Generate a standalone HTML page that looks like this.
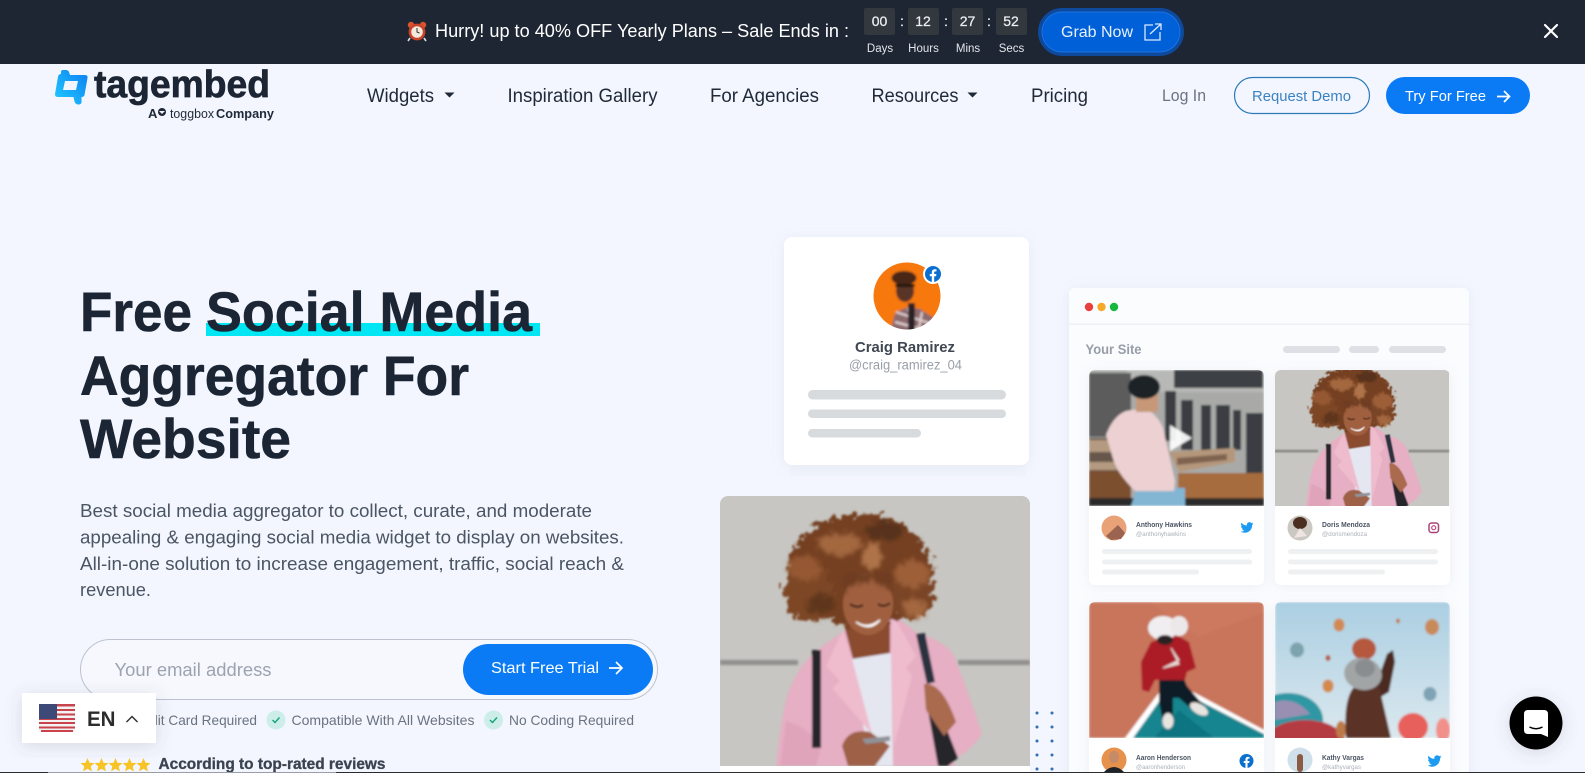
<!DOCTYPE html>
<html lang="en"><head><meta charset="utf-8"><title>Tagembed</title>
<style>
html,body{margin:0;padding:0;width:1585px;height:773px;overflow:hidden;background:#f3f6fe}
svg{display:block}
text{font-family:"Liberation Sans",sans-serif;white-space:pre}
.b{font-weight:700}
</style></head><body>
<svg width="1585" height="773" viewBox="0 0 1585 773" xmlns="http://www.w3.org/2000/svg">
<defs>
<filter id="soft" x="-5%" y="-5%" width="110%" height="110%"><feGaussianBlur stdDeviation="1"/></filter>
<filter id="soft2" x="-5%" y="-50%" width="110%" height="200%"><feGaussianBlur stdDeviation="1.4"/></filter>
<filter id="curl" x="-20%" y="-20%" width="140%" height="140%"><feTurbulence type="fractalNoise" baseFrequency=".16" numOctaves="3" seed="4" result="n"/><feDisplacementMap in="SourceGraphic" in2="n" scale="20" xChannelSelector="R" yChannelSelector="G"/></filter>
<filter id="curl2" x="-30%" y="-30%" width="160%" height="160%"><feTurbulence type="fractalNoise" baseFrequency=".22" numOctaves="2" seed="9" result="n"/><feDisplacementMap in="SourceGraphic" in2="n" scale="16" xChannelSelector="G" yChannelSelector="R"/><feGaussianBlur stdDeviation="1.5"/></filter>
<filter id="sh" x="-10%" y="-10%" width="120%" height="120%"><feDropShadow dx="0" dy="2" stdDeviation="6" flood-color="#8a97b5" flood-opacity=".13"/></filter>
<filter id="sh2" x="-30%" y="-30%" width="160%" height="160%"><feDropShadow dx="0" dy="3" stdDeviation="8" flood-color="#556" flood-opacity=".18"/></filter>
<clipPath id="pc"><rect width="175" height="160" rx="6"/></clipPath>
<clipPath id="wc"><rect width="310" height="290" rx="8"/></clipPath>
<clipPath id="ac"><circle cx="907" cy="296" r="33.500"/></clipPath>
<linearGradient id="lg" x1="1" y1="0" x2="0" y2="1"><stop offset="0" stop-color="#0c7ef2"/><stop offset="1" stop-color="#23cdff"/></linearGradient>
<linearGradient id="sky" x1="0" y1="0" x2="0" y2="1"><stop offset="0" stop-color="#abcfe2"/><stop offset="1" stop-color="#dbe8ee"/></linearGradient>
<symbol id="tw" viewBox="0 0 24 24"><path fill="#1d9bf0" d="M23.95 4.57a10 10 0 0 1-2.82.78 4.96 4.96 0 0 0 2.16-2.72c-.95.55-2 .96-3.12 1.19a4.92 4.92 0 0 0-8.38 4.48C7.69 8.1 4.07 6.13 1.64 3.16a4.82 4.82 0 0 0-.66 2.47c0 1.71.87 3.21 2.19 4.1a4.9 4.9 0 0 1-2.23-.61v.06a4.92 4.92 0 0 0 3.95 4.83 5 5 0 0 1-2.21.08 4.94 4.94 0 0 0 4.6 3.42A9.87 9.87 0 0 1 0 19.54a13.94 13.94 0 0 0 7.55 2.21c9.05 0 14-7.5 14-13.99 0-.21 0-.42-.02-.63A9.94 9.94 0 0 0 24 4.59z"/></symbol>
<symbol id="fb" viewBox="0 0 24 24"><circle cx="12" cy="12" r="12" fill="#0b6fd0"/><path fill="#fff" d="M16.6 15.4l.5-3.4h-3.3V9.8c0-.9.5-1.8 1.900-1.800h1.500V5.100s-1.300-.2-2.600-.2c-2.700 0-4.400 1.600-4.400 4.600V12h-3v3.400h3V24h3.600v-8.600z"/></symbol>
<g id="woman">
  <rect width="310" height="270" fill="#c7c6c2"/>
  <rect x="0" y="164" width="78" height="5" fill="#8f8e8a" filter="url(#soft2)"/>
  <rect x="238" y="164" width="72" height="5" fill="#8f8e8a" filter="url(#soft2)"/>
  <g filter="url(#soft)">
    <path d="M56 270Q60 230 66 205Q74 172 100 152L125 134 172 117 197 137Q225 145 234 160Q250 200 262 238Q250 256 232 264L236 270Z" fill="#e6afc3"/>
    <path d="M66 225q28 8 34 30l-4 15H60z" fill="#dfa4ba"/>
    <path d="M123 125L170 125 170 157 133 163Z" fill="#8a4c2e"/>
    <path d="M132 163L171 157 173 270 150 270Z" fill="#e4e7f0"/>
    <path d="M123 134L106 170 120 185 112 192 152 238 132 163ZM172 117L196 160 186 172 192 180 174 250 171 157Z" fill="#eebccd"/>
    <rect x="92" y="154" width="9" height="98" fill="#25262c"/>
    <path d="M196 138L205 137 215 186 207 188Z" fill="#2a3140"/>
    <path d="M205 198L213 198 238 262 228 270 218 270Z" fill="#25262c"/>
    <g filter="url(#curl)">
      <ellipse cx="140" cy="74" rx="72" ry="56" fill="#744024"/>
      <ellipse cx="88" cy="96" rx="24" ry="30" fill="#7d4727"/>
      <ellipse cx="190" cy="96" rx="24" ry="26" fill="#7a4526"/>
    </g>
    <g filter="url(#curl2)" opacity=".9">
      <ellipse cx="120" cy="48" rx="22" ry="11" fill="#a86c42"/>
      <ellipse cx="152" cy="60" rx="10" ry="14" fill="#b5794e"/>
      <ellipse cx="85" cy="72" rx="16" ry="12" fill="#995c36"/>
      <ellipse cx="192" cy="78" rx="18" ry="14" fill="#a0623a"/>
      <ellipse cx="165" cy="35" rx="20" ry="9" fill="#55301b"/>
      <ellipse cx="100" cy="108" rx="14" ry="10" fill="#5c351f"/>
      <ellipse cx="195" cy="112" rx="12" ry="10" fill="#a86c42"/>
    </g>
    <ellipse cx="148" cy="108" rx="25" ry="31" fill="#a0603f"/>
    <path d="M123 98Q148 72 173 98L172 76 124 76Z" fill="#6f3c20" filter="url(#curl2)"/>
    <path d="M130 108q7 5 13 1M158 108q6 4 12-1" stroke="#3a1e12" stroke-width="2" fill="none"/>
    <path d="M136 126q12 8 24-2q-10 12-24 2z" fill="#fff" stroke="#fff" stroke-width="1.500"/>
    <path d="M204 188Q222 186 236 226L224 240 206 214Z" fill="#a96a4d"/>
    <path d="M122 250Q128 232 150 236L170 250 155 270 128 270Z" fill="#9e6046"/>
    <path d="M142 243L170 240 170 245 146 248Z" fill="#8f9399"/>
  </g>
</g>
</defs>

<rect width="1585" height="773" fill="#f3f6fe"/>

<!-- top banner -->
<rect width="1585" height="64" fill="#1e2633"/>
<g>
  <circle cx="411" cy="25" r="3.200" fill="#d9532f"/><circle cx="423" cy="25" r="3.200" fill="#d9532f"/>
  <path d="M410 38l-2 3M424 38l2 3" stroke="#ddd" stroke-width="1.600"/>
  <circle cx="417" cy="32" r="8.400" fill="#c9432a"/><circle cx="417" cy="32" r="5.800" fill="#f4e9dc"/>
  <path d="M417 28v4l2.500 1" stroke="#333" stroke-width="1" fill="none"/>
</g>
<text x="435" y="37" font-size="18.500" fill="#fff" textLength="414" lengthAdjust="spacingAndGlyphs">Hurry! up to 40% OFF Yearly Plans – Sale Ends in :</text>
<g fill="#33383f">
<rect x="864" y="8" width="31" height="27" rx="2"/><rect x="908" y="8" width="31" height="27" rx="2"/><rect x="952" y="8" width="31" height="27" rx="2"/><rect x="996" y="8" width="31" height="27" rx="2"/>
</g>
<g font-size="14" fill="#eceff3" text-anchor="middle" stroke="#eceff3" stroke-width=".25">
<text x="879.500" y="26">00</text><text x="923" y="26">12</text><text x="967.500" y="26">27</text><text x="1011" y="26">52</text>
<text x="902" y="26">:</text><text x="946" y="26">:</text><text x="989" y="26">:</text>
</g>
<g font-size="11.500" fill="#e2e5ea" text-anchor="middle">
<text x="880" y="52">Days</text><text x="923.500" y="52">Hours</text><text x="968" y="52">Mins</text><text x="1011.500" y="52">Secs</text>
</g>
<rect x="1038" y="8" width="146" height="48" rx="24" fill="#0d4a9e"/>
<rect x="1042" y="12" width="138" height="40" rx="20" fill="#0060d8" stroke="#1b72e2"/>
<text x="1061" y="37" font-size="16" fill="#e8f1ff" textLength="72" lengthAdjust="spacingAndGlyphs">Grab Now</text>
<path d="M1153 25h-8v15h15v-8M1150 34l11-10M1155 24h6v6" fill="none" stroke="#dbe8ff" stroke-width="1.300"/>
<path d="M1545 25l12 12M1557 25l-12 12" stroke="#fff" stroke-width="2.200" stroke-linecap="round"/>

<!-- logo -->
<path d="M61 75V72q0-2 2-2h3q2 0 3 2l1 3h15q3 0 2.500 3l-3 17q-.5 2-3 2v5q0 2.500-3 2.500t-4-3l-1-4.500H58q-3 0-3-3l3-17q.3-3 3-3zM65 81l-2 9h13l2-9z" fill="url(#lg)" fill-rule="evenodd"/>
<text x="94" y="97" font-size="38" class="b" fill="#1c2534" textLength="176" lengthAdjust="spacingAndGlyphs" stroke="#1c2534" stroke-width=".7">tagembed</text>
<text x="148" y="118" font-size="13" class="b" fill="#1f2937">A</text>
<circle cx="162" cy="112" r="4" fill="#1f2937"/><path d="M159 111h6l-3 3z" fill="#f3f6fe"/>
<text x="170" y="118" font-size="12.500" fill="#1f2937" textLength="44" lengthAdjust="spacingAndGlyphs">toggbox</text>
<text x="216" y="118" font-size="12.500" class="b" fill="#1f2937" textLength="58" lengthAdjust="spacingAndGlyphs">Company</text>

<!-- nav -->
<g font-size="19" fill="#1f2937">
<text x="367" y="102" textLength="67" lengthAdjust="spacingAndGlyphs">Widgets</text>
<text x="507.500" y="102" textLength="150" lengthAdjust="spacingAndGlyphs">Inspiration Gallery</text>
<text x="710" y="102" textLength="109" lengthAdjust="spacingAndGlyphs">For Agencies</text>
<text x="871.500" y="102" textLength="87" lengthAdjust="spacingAndGlyphs">Resources</text>
<text x="1031" y="102" textLength="57" lengthAdjust="spacingAndGlyphs">Pricing</text>
</g>
<path d="M444.500 92.500h10l-5 5zM967.500 92.500h10l-5 5z" fill="#1f2937"/>
<text x="1162" y="101" font-size="16.500" fill="#6b7280" textLength="44" lengthAdjust="spacingAndGlyphs">Log In</text>
<rect x="1234.500" y="77.500" width="135" height="36" rx="18" fill="none" stroke="#2b7bb8" stroke-width="1.200"/>
<text x="1252" y="101" font-size="15" fill="#3a82c2" textLength="99" lengthAdjust="spacingAndGlyphs">Request Demo</text>
<rect x="1386" y="77" width="144" height="37" rx="18.500" fill="#0b7bf5"/>
<text x="1405" y="101" font-size="15" fill="#fff" textLength="81" lengthAdjust="spacingAndGlyphs">Try For Free</text>
<path d="M1497 96.500h12M1504 91l5.500 5.500-5.500 5.500" fill="none" stroke="#fff" stroke-width="1.700"/>

<!-- hero -->
<rect x="206" y="323" width="334" height="13" fill="#00e6f3"/>
<g font-size="56" class="b" fill="#1b2534" stroke="#1b2534" stroke-width=".6">
<text x="80" y="331" textLength="112" lengthAdjust="spacingAndGlyphs">Free</text>
<text x="206" y="331" textLength="326" lengthAdjust="spacingAndGlyphs">Social Media</text>
<text x="80" y="395" textLength="389" lengthAdjust="spacingAndGlyphs">Aggregator For</text>
<text x="80" y="458" textLength="211" lengthAdjust="spacingAndGlyphs">Website</text>
</g>
<g font-size="18.500" fill="#4b5563">
<text x="80" y="517" textLength="512" lengthAdjust="spacingAndGlyphs">Best social media aggregator to collect, curate, and moderate</text>
<text x="80" y="543.500" textLength="544" lengthAdjust="spacingAndGlyphs">appealing &amp; engaging social media widget to display on websites.</text>
<text x="80" y="570" textLength="544" lengthAdjust="spacingAndGlyphs">All-in-one solution to increase engagement, traffic, social reach &amp;</text>
<text x="80" y="596" textLength="71" lengthAdjust="spacingAndGlyphs">revenue.</text>
</g>

<!-- form -->
<rect x="80.500" y="639.500" width="577" height="60" rx="30" fill="#f6f8fe" stroke="#bcc2cf"/>
<text x="114.500" y="676" font-size="18.500" fill="#9ca3af" textLength="157" lengthAdjust="spacingAndGlyphs">Your email address</text>
<rect x="463" y="644" width="190" height="51" rx="25.500" fill="#0b7bf5"/>
<text x="491" y="673" font-size="16" fill="#fff" textLength="108" lengthAdjust="spacingAndGlyphs">Start Free Trial</text>
<path d="M609 668h13M616 662l6 6-6 6" fill="none" stroke="#fff" stroke-width="1.700"/>

<!-- checks -->
<text x="107" y="725" font-size="14" fill="#6b7280" textLength="150" lengthAdjust="spacingAndGlyphs">No Credit Card Required</text>
<circle cx="276" cy="720" r="9.500" fill="#cdeee8"/><path d="M272.500 720l2.500 2.500 4.500-5" fill="none" stroke="#14a37f" stroke-width="1.400"/>
<text x="291.500" y="725" font-size="14" fill="#6b7280" textLength="183" lengthAdjust="spacingAndGlyphs">Compatible With All Websites</text>
<circle cx="493.500" cy="720" r="9.500" fill="#cdeee8"/><path d="M490 720l2.500 2.500 4.500-5" fill="none" stroke="#14a37f" stroke-width="1.400"/>
<text x="509" y="725" font-size="14" fill="#6b7280" textLength="125" lengthAdjust="spacingAndGlyphs">No Coding Required</text>

<!-- stars -->
<g fill="#f7c325">
<path id="st" d="M87.500 758l2 4.700 5 .4-3.800 3.300 1.200 5-4.400-2.700-4.400 2.700 1.200-5-3.800-3.300 5-.4z"/>
<use href="#st" x="14"/><use href="#st" x="28"/><use href="#st" x="42"/><use href="#st" x="56"/>
</g>
<text x="158.500" y="769" font-size="15.500" class="b" fill="#3b4350" stroke="#3b4350" stroke-width=".3" textLength="227" lengthAdjust="spacingAndGlyphs">According to top-rated reviews</text>

<!-- language widget -->
<rect x="22" y="693" width="134" height="50" fill="#fff" filter="url(#sh2)"/>
<g>
  <rect x="39" y="704" width="36" height="28" rx="3" fill="#f3f3f3"/>
  <g fill="#c9434c"><rect x="39" y="704" width="36" height="2.500"/><rect x="39" y="709" width="36" height="2"/><rect x="39" y="713.500" width="36" height="2"/><rect x="39" y="718" width="36" height="2"/><rect x="39" y="722" width="36" height="2"/><rect x="39" y="726.500" width="36" height="2"/><rect x="41" y="730" width="32" height="2"/></g>
  <rect x="39" y="704" width="18" height="15" fill="#3d4a78"/>
</g>
<text x="87" y="726" font-size="21" class="b" fill="#2c2c2c" textLength="28.500" lengthAdjust="spacingAndGlyphs">EN</text>
<path d="M126.500 722l5.500-5.500 5.500 5.500" fill="none" stroke="#333" stroke-width="1.500"/>

<!-- profile card -->
<rect x="784" y="237" width="245" height="228" rx="8" fill="#fff" filter="url(#sh)"/>
<rect x="790" y="466" width="236" height="10" fill="#e6ebf5" opacity=".25"/>
<g clip-path="url(#ac)"><g filter="url(#soft)">
  <rect x="870" y="260" width="75" height="75" fill="#f7780f"/>
  <path d="M892 330q0-10 4-18l12-5 12 2 14 9q4 5 2 10l-10 12h-30z" fill="#8c6a6e"/>
  <path d="M896 312l36 12M895 322l30 8M908 308l6 26M922 312l-4 22" stroke="#e0cfcf" stroke-width="2.200" fill="none"/>
  <rect x="908" y="303" width="7" height="30" fill="#2c2226"/>
  <ellipse cx="905" cy="291" rx="9" ry="11" fill="#5a3526"/>
  <ellipse cx="904" cy="278" rx="12.500" ry="7" fill="#4a2618"/>
  <rect x="895" y="284" width="20" height="3" rx="1.500" fill="#1d1210"/>
</g></g>
<circle cx="933" cy="274" r="10" fill="#fff"/>
<use href="#fb" x="925" y="266" width="16" height="16"/>
<text x="855" y="352" font-size="15" class="b" fill="#3f4752" textLength="100" lengthAdjust="spacingAndGlyphs">Craig Ramirez</text>
<text x="849" y="369.500" font-size="13.500" fill="#9aa0aa" textLength="113" lengthAdjust="spacingAndGlyphs">@craig_ramirez_04</text>
<g fill="#d8dbde">
<rect x="808" y="390" width="198" height="9.500" rx="4.700"/><rect x="808" y="409.500" width="198" height="8.500" rx="4.200"/><rect x="808" y="429" width="113" height="8.500" rx="4.200"/>
</g>

<!-- large woman photo -->
<g transform="translate(720 496)" clip-path="url(#wc)">
  <rect width="310" height="280" fill="#fff"/>
  <svg width="310" height="270" viewBox="0 0 310 270"><use href="#woman"/></svg>
</g>
<g fill="#2f6fb3">
<circle cx="1037" cy="713" r="1.500"/><circle cx="1037" cy="727" r="1.500"/><circle cx="1037" cy="741" r="1.500"/><circle cx="1037" cy="755" r="1.500"/><circle cx="1037" cy="769" r="1.500"/>
<circle cx="1052" cy="713" r="1.500"/><circle cx="1052" cy="727" r="1.500"/><circle cx="1052" cy="741" r="1.500"/><circle cx="1052" cy="755" r="1.500"/><circle cx="1052" cy="769" r="1.500"/>
</g>

<!-- site card -->
<rect x="1069" y="288" width="400" height="500" rx="6" fill="#fbfcfe" filter="url(#sh)"/>
<rect x="1069" y="323.500" width="400" height="1.500" fill="#eef0f4"/>
<circle cx="1089" cy="307" r="4.200" fill="#e8403f"/><circle cx="1101.500" cy="307" r="4.200" fill="#f4a928"/><circle cx="1114" cy="307" r="4.200" fill="#16b83f"/>
<text x="1085.500" y="354" font-size="13.500" class="b" fill="#979da8" textLength="56" lengthAdjust="spacingAndGlyphs">Your Site</text>
<g fill="#dde0e4"><rect x="1283" y="346" width="57" height="7" rx="3.500"/><rect x="1349" y="346" width="30" height="7" rx="3.500"/><rect x="1389" y="346" width="57" height="7" rx="3.500"/></g>

<!-- inner cards -->
<g fill="#fff" filter="url(#sh)">
<rect x="1089" y="370" width="175" height="215" rx="6"/><rect x="1275" y="370" width="175" height="215" rx="6"/>
<rect x="1089" y="602" width="175" height="190" rx="6"/><rect x="1275" y="602" width="175" height="190" rx="6"/>
</g>

<!-- photo 1 -->
<g transform="translate(1089 370)" clip-path="url(#pc)"><svg width="175" height="136" viewBox="0 0 175 136"><g filter="url(#soft)">
  <rect width="175" height="136" fill="#a9aaa8"/>
  <rect x="38" y="0" width="137" height="22" fill="#b8b9b7"/>
  <rect x="0" y="3" width="42" height="64" fill="#5b5c5c"/>
  <rect x="85" y="0" width="89" height="18" fill="#3d4044"/>
  <g fill="#3a3e42"><rect x="76" y="21" width="11" height="50"/><rect x="92" y="30" width="12" height="50"/><rect x="112" y="35" width="10" height="45"/><rect x="127" y="35" width="14" height="45"/><rect x="144" y="40" width="8" height="40"/><rect x="157" y="43" width="17" height="62"/></g>
  <path d="M0 68L45 68 45 102 0 102Z" fill="#66564b"/>
  <path d="M80 82L146 78 146 92 90 102Z" fill="#b5977c"/><path d="M88 88l50-4v6l-50 5z" fill="#7f6450"/>
  <path d="M0 70h30v12H0zM0 92h35v8H0z" fill="#b49a80"/>
  <rect x="89" y="103" width="86" height="26" fill="#a66c3e"/>
  <rect x="0" y="101" width="42" height="30" fill="#7c4f2f"/>
  <rect x="0" y="128" width="175" height="8" fill="#2c2a2a"/>
  <path d="M42 136L48 118 96 118 96 136Z" fill="#83b6d3"/>
  <path d="M17 65Q24 46 37 41Q50 38 61 41Q70 48 74 58L86 111 85 121 46 121Q30 105 25 92Z" fill="#ecd0d2"/>
  <rect x="47" y="24" width="22" height="18" fill="#c69878"/>
  <ellipse cx="55" cy="17" rx="16" ry="12" fill="#1d2228"/>
  <path d="M81 55L103 68 81 81Z" fill="#fff" opacity=".92"/>
</g></svg></g>

<!-- photo 2 -->
<g transform="translate(1275 370)" clip-path="url(#pc)"><svg width="175" height="136" viewBox="0 0 175 136"><g transform="translate(-1 -13) scale(.565)"><use href="#woman"/></g></svg></g>

<!-- photo 3 -->
<g transform="translate(1089 602)" clip-path="url(#pc)"><svg width="175" height="136" viewBox="0 0 175 136"><g filter="url(#soft)">
  <rect width="175" height="136" fill="#c8745b"/>
  <path d="M60 0L110 35 175 10 175 0Z" fill="#d07d63" opacity=".5"/>
  <path d="M36 136L72 88 104 90 175 128 175 136Z" fill="#fff"/>
  <path d="M44 136L74 94 103 95 175 132 175 136Z" fill="#15858f"/>
  <path d="M65 136L90 108 125 136Z" fill="#0f6d7a" opacity=".7"/>
  <path d="M70 74L92 70 98 84 115 104 106 110 90 96 84 96 84 118 74 120 70 100Z" fill="#0f1c26"/>
  <ellipse cx="79" cy="119" rx="5.500" ry="8" fill="#e8e4e0"/><ellipse cx="110" cy="107" rx="10" ry="5" fill="#e8e4e0" transform="rotate(30 110 107)"/>
  <path d="M62 40L86 32 100 40 107 66 98 70 96 78 66 78 60 90 53 88 52 60Z" fill="#ab1b28"/>
  <path d="M82 46L90 62 74 66 90 58Z" fill="#ead9d7" stroke="#ead9d7"/>
  <ellipse cx="74" cy="26" rx="15" ry="12" fill="#f0eef0"/><ellipse cx="90" cy="24" rx="9" ry="10" fill="#ece8ea"/><ellipse cx="76" cy="38" rx="8" ry="5" fill="#2a2023"/>
</g></svg></g>

<!-- photo 4 -->
<g transform="translate(1275 602)" clip-path="url(#pc)"><svg width="175" height="136" viewBox="0 0 175 136"><g filter="url(#soft)">
  <rect width="175" height="136" fill="url(#sky)"/>
  <ellipse cx="64" cy="23" rx="5.500" ry="6.500" fill="#d18a56"/><ellipse cx="157" cy="25" rx="7" ry="8" fill="#c98a5a"/><ellipse cx="22" cy="48" rx="7" ry="7.500" fill="#7da3ad"/>
  <ellipse cx="89" cy="47" rx="12" ry="11" fill="#b5583c"/><ellipse cx="53" cy="56" rx="2.500" ry="3" fill="#b5583c"/>
  <ellipse cx="53" cy="84" rx="5.500" ry="6.500" fill="#d28a4e"/><ellipse cx="155" cy="92" rx="6.500" ry="7" fill="#7fa3b4"/><ellipse cx="123" cy="19" rx="2" ry="2.500" fill="#c07c4c"/>
  <ellipse cx="13" cy="118" rx="35" ry="27" fill="#2e97a3"/><path d="M0 100q20-6 35 12l-35 6z" fill="#c78bb8" opacity=".7"/>
  <ellipse cx="30" cy="140" rx="40" ry="22" fill="#b53a42"/>
  <ellipse cx="138" cy="125" rx="15" ry="14" fill="#e7605c"/><ellipse cx="168" cy="128" rx="7" ry="12" fill="#f1908a"/><ellipse cx="66" cy="128" rx="5" ry="9" fill="#bd7a4a"/>
  <path d="M112 52L118 48 120 60 114 90 104 96 100 86Z" fill="#4c2b22"/>
  <path d="M71 136Q68 100 78 86L104 84 116 136Z" fill="#5a3328"/>
  <ellipse cx="88" cy="72" rx="19" ry="16" fill="#a2a5a6" transform="rotate(12 88 72)"/><ellipse cx="90" cy="66" rx="10" ry="9" fill="#8a8d8f"/>
</g></svg></g>

<!-- card meta row 1 -->
<g>
<circle cx="1114" cy="528" r="12.500" fill="#e9a278"/><path d="M1106 536l12-11 7 8-4 6-10 1z" fill="#9a6450"/>
<text x="1136" y="527" font-size="7" class="b" fill="#4b5563" textLength="56" lengthAdjust="spacingAndGlyphs">Anthony Hawkins</text>
<text x="1136" y="536" font-size="6" fill="#aab0b8" textLength="50" lengthAdjust="spacingAndGlyphs">@anthonyhawkins</text>
<use href="#tw" x="1240.500" y="521" width="13" height="13"/>
<g fill="#eff0f2"><rect x="1102" y="549" width="150" height="5" rx="2.500"/><rect x="1102" y="559.500" width="150" height="5" rx="2.500"/><rect x="1102" y="569.500" width="97" height="5" rx="2.500"/></g>
<circle cx="1300" cy="528" r="12.500" fill="#cbc7c1"/><ellipse cx="1300" cy="523" rx="7" ry="6" fill="#4a2e20"/><path d="M1294 538l6-10 7 8z" fill="#efe3e3"/>
<text x="1322" y="527" font-size="7" class="b" fill="#4b5563" textLength="48" lengthAdjust="spacingAndGlyphs">Doris Mendoza</text>
<text x="1322" y="536" font-size="6" fill="#aab0b8" textLength="45" lengthAdjust="spacingAndGlyphs">@dorismendoza</text>
<rect x="1429" y="523" width="9.500" height="9.500" rx="2.500" fill="none" stroke="#a8447c" stroke-width="1.500"/><circle cx="1433.700" cy="527.700" r="2" fill="none" stroke="#c0497a" stroke-width="1.200"/>
<g fill="#eff0f2"><rect x="1288" y="549" width="150" height="5" rx="2.500"/><rect x="1288" y="559.500" width="150" height="5" rx="2.500"/><rect x="1288" y="569.500" width="97" height="5" rx="2.500"/></g>
</g>
<!-- card meta row 2 -->
<g>
<circle cx="1114" cy="760" r="12.500" fill="#e6924c"/><ellipse cx="1114" cy="757" rx="5" ry="6" fill="#c58a68"/><path d="M1104 772q10-10 20 0z" fill="#1f2328"/>
<text x="1136" y="760" font-size="7" class="b" fill="#4b5563" textLength="55" lengthAdjust="spacingAndGlyphs">Aaron Henderson</text>
<text x="1136" y="769" font-size="6" fill="#aab0b8" textLength="49" lengthAdjust="spacingAndGlyphs">@aaronhenderson</text>
<use href="#fb" x="1239.500" y="754" width="14" height="14"/>
<circle cx="1300" cy="760" r="12.500" fill="#cfe0ea"/><rect x="1297" y="754" width="6" height="18" rx="3" fill="#8a5a44"/>
<text x="1322" y="760" font-size="7" class="b" fill="#4b5563" textLength="42" lengthAdjust="spacingAndGlyphs">Kathy Vargas</text>
<text x="1322" y="769" font-size="6" fill="#aab0b8" textLength="39" lengthAdjust="spacingAndGlyphs">@kathyvargas</text>
<use href="#tw" x="1427.500" y="754" width="14" height="14"/>
</g>

<!-- chat bubble -->
<circle cx="1536" cy="723" r="26.500" fill="#000" filter="url(#sh2)"/>
<path d="M1528 710h16q4 0 4 4v23l-7-3h-13q-4 0-4-4v-16q0-4 4-4z" fill="#fff"/>
<path d="M1529.500 727q6.500 3.500 13 0" fill="none" stroke="#000" stroke-width="1.500"/>

<!-- bottom edge -->
<rect x="0" y="772" width="1585" height="1" fill="#2a2c30"/>
<rect x="48" y="772" width="288" height="1" fill="#9a9ea6"/>
</svg>
</body></html>
